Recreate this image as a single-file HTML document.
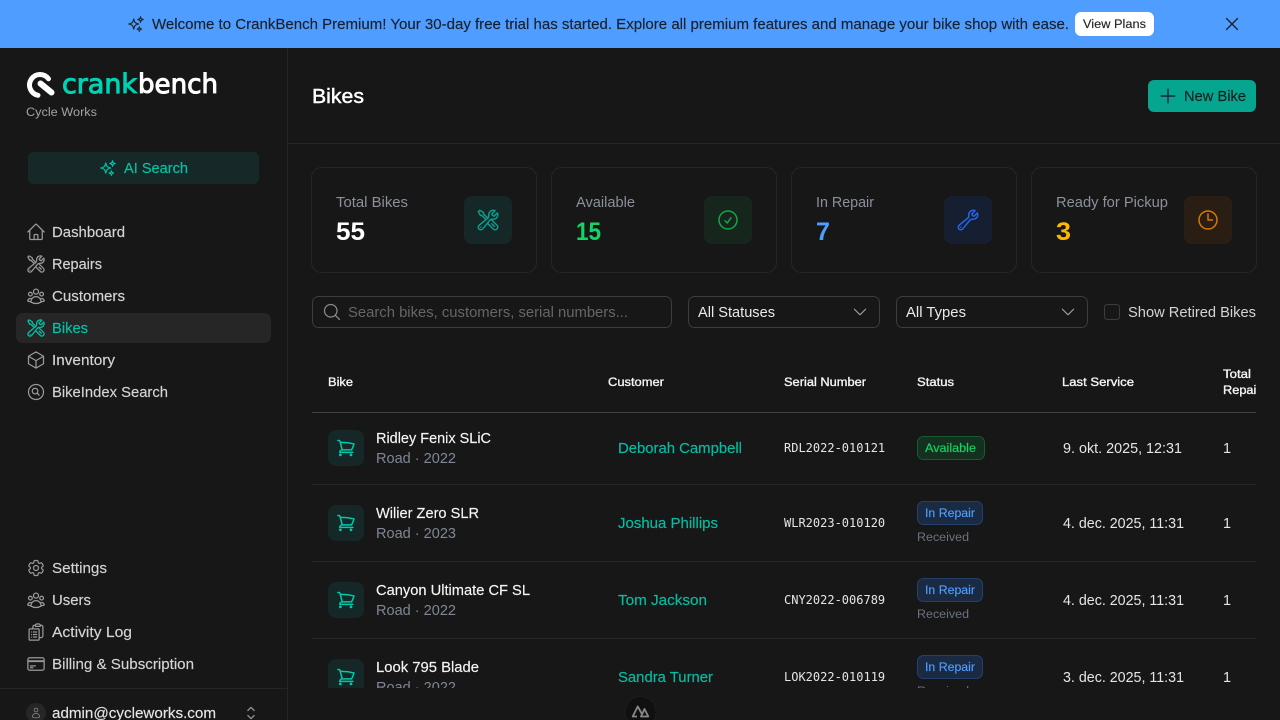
<!DOCTYPE html>
<html lang="en">
<head>
<meta charset="utf-8">
<title>CrankBench - Bikes</title>
<style>
html,body{margin:0;padding:0;width:1280px;height:720px;overflow:hidden;background:#171717}
svg{display:block}
text{font-family:"Liberation Sans",sans-serif;font-size:14.4px;fill:currentColor;white-space:pre}
.m{stroke:currentColor;stroke-width:.15}
.s{stroke:currentColor;stroke-width:.35}
.sm{font-size:12.3px}
.mono{font-family:"DejaVu Sans Mono",monospace;font-size:12px}
.i{fill:none;stroke-width:1.5;stroke-linecap:round;stroke-linejoin:round}
.nav{color:#d4d4d4}
.lbl{color:#8b909a}
.sub{color:#7f8794}
.nm{color:#f5f5f5}
.cu{color:#00bfa5}
.dt{color:#e5e5e5}
.hd{color:#f5f5f5}
.val{font-size:25px;font-weight:bold}
.logo{font-family:"DejaVu Sans",sans-serif;font-size:27px;stroke:currentColor;stroke-width:1}
</style>
</head>
<body>
<svg xmlns="http://www.w3.org/2000/svg" width="1280" height="720" viewBox="0 0 1280 720">
<defs>
<symbol id="tools" viewBox="0 0 24 24"><path d="M11.42 15.17 17.25 21A2.652 2.652 0 0 0 21 17.25l-5.877-5.877M11.42 15.17l2.496-3.03c.317-.384.74-.626 1.208-.766M11.42 15.17l-4.655 5.653a2.548 2.548 0 1 1-3.586-3.586l6.837-5.63m5.108-.233c.55-.164 1.163-.188 1.743-.14a4.5 4.5 0 0 0 4.486-6.336l-3.276 3.277a3.004 3.004 0 0 1-2.25-2.25l3.276-3.276a4.5 4.5 0 0 0-6.336 4.486c.091 1.076-.071 2.264-.904 2.95l-.102.085m-1.745 1.437L5.909 7.5H4.5L2.25 3.75l1.5-1.5L7.5 4.5v1.409l4.26 4.26m-1.745 1.437 1.745-1.437m6.615 8.206L15.75 15.75M4.867 19.125h.008v.008h-.008v-.008Z"/></symbol>
<symbol id="home" viewBox="0 0 24 24"><path d="m2.25 12 8.954-8.955c.44-.439 1.152-.439 1.591 0L21.75 12M4.5 9.75v10.125c0 .621.504 1.125 1.125 1.125H9.75v-4.875c0-.621.504-1.125 1.125-1.125h2.25c.621 0 1.125.504 1.125 1.125V21h4.125c.621 0 1.125-.504 1.125-1.125V9.75M8.25 21h8.25"/></symbol>
<symbol id="group" viewBox="0 0 24 24"><path d="M18 18.72a9.094 9.094 0 0 0 3.741-.479 3 3 0 0 0-4.682-2.72m.94 3.198.001.031c0 .225-.012.447-.037.666A11.944 11.944 0 0 1 12 21c-2.17 0-4.207-.576-5.963-1.584A6.062 6.062 0 0 1 6 18.719m12 0a5.971 5.971 0 0 0-.941-3.197m0 0A5.995 5.995 0 0 0 12 12.75a5.995 5.995 0 0 0-5.058 2.772m0 0a3 3 0 0 0-4.681 2.72 8.986 8.986 0 0 0 3.74.477m.94-3.197a5.971 5.971 0 0 0-.94 3.197M15 6.75a3 3 0 1 1-6 0 3 3 0 0 1 6 0Zm6 3a2.25 2.25 0 1 1-4.5 0 2.25 2.25 0 0 1 4.5 0Zm-13.5 0a2.25 2.25 0 1 1-4.5 0 2.25 2.25 0 0 1 4.5 0Z"/></symbol>
<symbol id="cube" viewBox="0 0 24 24"><path d="m21 7.5-9-5.25L3 7.5m18 0-9 5.25m9-5.25v9l-9 5.25M3 7.5l9 5.25M3 7.5v9l9 5.25m0-9v9"/></symbol>
<symbol id="msearch" viewBox="0 0 24 24"><path d="m15.75 15.75-2.489-2.489m0 0a3.375 3.375 0 1 0-4.773-4.773 3.375 3.375 0 0 0 4.774 4.774ZM21 12a9 9 0 1 1-18 0 9 9 0 0 1 18 0Z"/></symbol>
<symbol id="cog" viewBox="0 0 24 24"><path d="M9.594 3.94c.09-.542.56-.94 1.11-.94h2.593c.55 0 1.02.398 1.11.94l.213 1.281c.063.374.313.686.645.87.074.04.147.083.22.127.325.196.72.257 1.075.124l1.217-.456a1.125 1.125 0 0 1 1.37.49l1.296 2.247a1.125 1.125 0 0 1-.26 1.431l-1.003.827c-.293.241-.438.613-.43.992a7.723 7.723 0 0 1 0 .255c-.008.378.137.75.43.991l1.004.827c.424.35.534.955.26 1.43l-1.298 2.247a1.125 1.125 0 0 1-1.369.491l-1.217-.456c-.355-.133-.75-.072-1.076.124a6.47 6.47 0 0 1-.22.128c-.331.183-.581.495-.644.869l-.213 1.281c-.09.543-.56.94-1.11.94h-2.594c-.55 0-1.019-.398-1.11-.94l-.213-1.281c-.062-.374-.312-.686-.644-.87a6.52 6.52 0 0 1-.22-.127c-.325-.196-.72-.257-1.076-.124l-1.217.456a1.125 1.125 0 0 1-1.369-.49l-1.297-2.247a1.125 1.125 0 0 1 .26-1.431l1.004-.827c.292-.24.437-.613.43-.991a6.932 6.932 0 0 1 0-.255c.007-.38-.138-.751-.43-.992l-1.004-.827a1.125 1.125 0 0 1-.26-1.43l1.297-2.247a1.125 1.125 0 0 1 1.37-.491l1.216.456c.356.133.751.072 1.076-.124.072-.044.146-.086.22-.128.332-.183.582-.495.644-.869l.214-1.28Z"/><path d="M15 12a3 3 0 1 1-6 0 3 3 0 0 1 6 0Z"/></symbol>
<symbol id="clip" viewBox="0 0 24 24"><path d="M9 12h3.75M9 15h3.75M9 18h3.75m3 .75H18a2.25 2.25 0 0 0 2.25-2.25V6.108c0-1.135-.845-2.098-1.976-2.192a48.424 48.424 0 0 0-1.123-.08m-5.801 0c-.065.21-.1.433-.1.664 0 .414.336.75.75.75h4.5a.75.75 0 0 0 .75-.75 2.25 2.25 0 0 0-.1-.664m-5.8 0A2.251 2.251 0 0 1 13.5 2.25H15c1.012 0 1.867.668 2.15 1.586m-5.8 0c-.376.023-.75.05-1.124.08C9.095 4.01 8.25 4.973 8.25 6.108V8.25m0 0H4.875c-.621 0-1.125.504-1.125 1.125v11.25c0 .621.504 1.125 1.125 1.125h9.75c.621 0 1.125-.504 1.125-1.125V9.375c0-.621-.504-1.125-1.125-1.125H8.25ZM6.75 12h.008v.008H6.75V12Zm0 3h.008v.008H6.75V15Zm0 3h.008v.008H6.75V18Z"/></symbol>
<symbol id="card" viewBox="0 0 24 24"><path d="M2.25 8.25h19.5M2.25 9h19.5m-16.5 5.25h6m-6 2.25h3m-3.75 3h15a2.25 2.25 0 0 0 2.25-2.25V6.75A2.25 2.25 0 0 0 19.5 4.5h-15a2.25 2.25 0 0 0-2.25 2.25v10.5A2.25 2.25 0 0 0 4.5 19.5Z"/></symbol>
<symbol id="spark" viewBox="0 0 24 24"><path d="M9.813 15.904 9 18.75l-.813-2.846a4.5 4.5 0 0 0-3.09-3.09L2.25 12l2.846-.813a4.5 4.5 0 0 0 3.09-3.09L9 5.25l.813 2.846a4.5 4.5 0 0 0 3.09 3.09L15.75 12l-2.846.813a4.5 4.5 0 0 0-3.09 3.09ZM18.259 8.715 18 9.75l-.259-1.035a3.375 3.375 0 0 0-2.455-2.456L14.25 6l1.036-.259a3.375 3.375 0 0 0 2.455-2.456L18 2.25l.259 1.035a3.375 3.375 0 0 0 2.456 2.456L21.75 6l-1.035.259a3.375 3.375 0 0 0-2.456 2.456ZM16.894 20.567 16.5 21.75l-.394-1.183a2.25 2.25 0 0 0-1.423-1.423L13.5 18.75l1.183-.394a2.25 2.25 0 0 0 1.423-1.423l.394-1.183.394 1.183a2.25 2.25 0 0 0 1.423 1.423l1.183.394-1.183.394a2.25 2.25 0 0 0-1.423 1.423Z"/></symbol>
<symbol id="check" viewBox="0 0 24 24"><path d="M9 12.75 11.25 15 15 9.75M21 12a9 9 0 1 1-18 0 9 9 0 0 1 18 0Z"/></symbol>
<symbol id="wrench" viewBox="0 0 24 24"><path d="M21.75 6.75a4.5 4.5 0 0 1-4.884 4.484c-1.076-.091-2.264.071-2.95.904l-7.152 8.684a2.548 2.548 0 1 1-3.586-3.586l8.684-7.152c.833-.686.995-1.874.904-2.95a4.5 4.5 0 0 1 6.336-4.486l-3.276 3.276a3.004 3.004 0 0 0 2.25 2.25l3.276-3.276c.256.565.398 1.192.398 1.852Z"/><path d="M4.867 19.125h.008v.008h-.008v-.008Z"/></symbol>
<symbol id="clock" viewBox="0 0 24 24"><path d="M12 6v6h4.5m4.5 0a9 9 0 1 1-18 0 9 9 0 0 1 18 0Z"/></symbol>
<symbol id="cart" viewBox="0 0 24 24"><path d="M2.25 3h1.386c.51 0 .955.343 1.087.835l.383 1.437M7.5 14.25a3 3 0 0 0-3 3h15.75m-12.75-3h11.218c1.121-2.3 2.1-4.684 2.924-7.138a60.114 60.114 0 0 0-16.536-1.84M7.5 14.25 5.106 5.272M6 20.25a.75.75 0 1 1-1.5 0 .75.75 0 0 1 1.5 0Zm12.75 0a.75.75 0 1 1-1.5 0 .75.75 0 0 1 1.5 0Z"/></symbol>
<symbol id="glass" viewBox="0 0 24 24"><path d="m21 21-5.197-5.197m0 0A7.5 7.5 0 1 0 5.196 5.196a7.5 7.5 0 0 0 10.607 10.607Z"/></symbol>
<symbol id="chev" viewBox="0 0 24 24"><path d="m19.5 8.25-7.5 7.5-7.5-7.5"/></symbol>
<symbol id="updown" viewBox="0 0 24 24"><path d="M8.25 15 12 18.75 15.75 15m-7.5-6L12 5.25 15.75 9"/></symbol>
<symbol id="user" viewBox="0 0 24 24"><path d="M15.75 6a3.75 3.75 0 1 1-7.5 0 3.75 3.75 0 0 1 7.5 0ZM4.501 20.118a7.5 7.5 0 0 1 14.998 0A17.933 17.933 0 0 1 12 21.75c-2.676 0-5.216-.584-7.499-1.632Z"/></symbol>
<symbol id="xm" viewBox="0 0 24 24"><path d="M6 18 18 6M6 6l12 12"/></symbol>
<symbol id="plus" viewBox="0 0 24 24"><path d="M12 4.5v15m7.5-7.5h-15"/></symbol>
<clipPath id="tbl"><rect x="312" y="350" width="944" height="338"/></clipPath>
</defs>

<rect width="1280" height="720" fill="#171717"/>

<!-- Banner -->
<rect width="1280" height="48" fill="#4f9eff"/>
<use href="#spark" x="127" y="15" width="18" height="18" class="i" stroke="#1c2430"/>
<text x="152" y="29" class="m" textLength="917" lengthAdjust="spacingAndGlyphs" color="#1a202c">Welcome to CrankBench Premium! Your 30-day free trial has started. Explore all premium features and manage your bike shop with ease.</text>
<rect x="1075" y="12" width="79" height="24" rx="6" fill="#fff"/>
<text x="1083" y="28" class="sm m" textLength="63" lengthAdjust="spacingAndGlyphs" color="#262626">View Plans</text>
<use href="#xm" x="1221" y="13" width="22" height="22" class="i" stroke="#1c2430"/>

<!-- Sidebar -->
<rect x="287" y="48" width="1" height="672" fill="#262626"/>
<path d="M48.5 78.8A10.5 10.5 0 1 0 38 95.3" fill="none" stroke="#fff" stroke-width="5" stroke-linecap="round"/>
<path d="M40 83 52.5 93.5" fill="none" stroke="#171717" stroke-width="9.5" stroke-linecap="round"/>
<path d="M40.5 83.5 51.5 92.5" fill="none" stroke="#fff" stroke-width="6" stroke-linecap="round"/>
<text x="62" y="93" class="logo" textLength="75" lengthAdjust="spacingAndGlyphs" color="#00d2b4">crank</text>
<text x="138" y="93" class="logo" textLength="80" lengthAdjust="spacingAndGlyphs" color="#ffffff">bench</text>
<text x="26" y="116" class="sm" textLength="71" lengthAdjust="spacingAndGlyphs" color="#a3a3a3">Cycle Works</text>

<rect x="28" y="152" width="231" height="32" rx="6" fill="#162827"/>
<use href="#spark" x="99" y="159" width="18" height="18" class="i" stroke="#00c4a7"/>
<text x="124" y="173" class="m" textLength="64" lengthAdjust="spacingAndGlyphs" color="#00c4a7">AI Search</text>

<rect x="16" y="313" width="255" height="30" rx="7" fill="#262626"/>
<g class="i" stroke="#999">
<use href="#home" x="26" y="222" width="20" height="20"/>
<use href="#tools" x="26" y="254" width="20" height="20"/>
<use href="#group" x="26" y="286" width="20" height="20"/>
<use href="#tools" x="26" y="318" width="20" height="20" stroke="#00c4a7"/>
<use href="#cube" x="26" y="350" width="20" height="20"/>
<use href="#msearch" x="26" y="382" width="20" height="20"/>
<use href="#cog" x="26" y="558" width="20" height="20"/>
<use href="#group" x="26" y="590" width="20" height="20"/>
<use href="#clip" x="26" y="622" width="20" height="20"/>
<use href="#card" x="26" y="654" width="20" height="20"/>
</g>
<g class="nav">
<text x="52" y="237" class="m" textLength="73" lengthAdjust="spacingAndGlyphs">Dashboard</text>
<text x="52" y="269" class="m" textLength="50" lengthAdjust="spacingAndGlyphs">Repairs</text>
<text x="52" y="301" class="m" textLength="73" lengthAdjust="spacingAndGlyphs">Customers</text>
<text x="52" y="333" class="m" textLength="36" lengthAdjust="spacingAndGlyphs" color="#00c4a7">Bikes</text>
<text x="52" y="365" class="m" textLength="63" lengthAdjust="spacingAndGlyphs">Inventory</text>
<text x="52" y="397" class="m" textLength="116" lengthAdjust="spacingAndGlyphs">BikeIndex Search</text>
<text x="52" y="573" class="m" textLength="55" lengthAdjust="spacingAndGlyphs">Settings</text>
<text x="52" y="605" class="m" textLength="39" lengthAdjust="spacingAndGlyphs">Users</text>
<text x="52" y="637" class="m" textLength="80" lengthAdjust="spacingAndGlyphs">Activity Log</text>
<text x="52" y="669" class="m" textLength="142" lengthAdjust="spacingAndGlyphs">Billing &amp; Subscription</text>
</g>
<rect x="0" y="688" width="287" height="1" fill="#262626"/>
<circle cx="36" cy="713" r="10" fill="#262626"/>
<use href="#user" x="30" y="707" width="12" height="12" class="i" stroke="#8a8a8a"/>
<text x="52" y="718" class="m" textLength="164" lengthAdjust="spacingAndGlyphs" color="#e5e5e5">admin@cycleworks.com</text>
<use href="#updown" x="241" y="703" width="20" height="20" class="i" stroke="#8f8f8f"/>

<!-- Header -->
<rect x="288" y="143" width="992" height="1" fill="#262626"/>
<text x="312" y="103" style="font-size:20.5px;stroke-width:.45" class="s" textLength="52" lengthAdjust="spacingAndGlyphs" color="#fff">Bikes</text>
<rect x="1148" y="80" width="108" height="32" rx="6" fill="#05a58f"/>
<use href="#plus" x="1157" y="85" width="22" height="22" class="i" stroke="#123"/>
<text x="1184" y="101" class="m" textLength="62" lengthAdjust="spacingAndGlyphs" color="#13201f">New Bike</text>

<!-- Stat cards -->
<g fill="#171717" stroke="#262626">
<rect x="311.5" y="167.5" width="225" height="105" rx="10"/>
<rect x="551.5" y="167.5" width="225" height="105" rx="10"/>
<rect x="791.5" y="167.5" width="225" height="105" rx="10"/>
<rect x="1031.5" y="167.5" width="225" height="105" rx="10"/>
</g>
<g class="lbl">
<text x="336" y="207" textLength="72" lengthAdjust="spacingAndGlyphs">Total Bikes</text>
<text x="576" y="207" textLength="59" lengthAdjust="spacingAndGlyphs">Available</text>
<text x="816" y="207" textLength="58" lengthAdjust="spacingAndGlyphs">In Repair</text>
<text x="1056" y="207" textLength="112" lengthAdjust="spacingAndGlyphs">Ready for Pickup</text>
</g>
<text x="336" y="240" class="val" textLength="29" lengthAdjust="spacingAndGlyphs" color="#fff">55</text>
<text x="576" y="240" class="val" textLength="25" lengthAdjust="spacingAndGlyphs" color="#0fd765">15</text>
<text x="816" y="240" class="val" textLength="14" lengthAdjust="spacingAndGlyphs" color="#4f9eff">7</text>
<text x="1056" y="240" class="val" textLength="15" lengthAdjust="spacingAndGlyphs" color="#ffb800">3</text>
<rect x="464" y="196" width="48" height="48" rx="8" fill="#152827"/>
<rect x="704" y="196" width="48" height="48" rx="8" fill="#16261c"/>
<rect x="944" y="196" width="48" height="48" rx="8" fill="#161f31"/>
<rect x="1184" y="196" width="48" height="48" rx="8" fill="#2a1e14"/>
<use href="#tools" x="476" y="208" width="24" height="24" class="i" stroke="#0b9c8b"/>
<use href="#check" x="716" y="208" width="24" height="24" class="i" stroke="#16a34a"/>
<use href="#wrench" x="956" y="208" width="24" height="24" class="i" stroke="#2563eb"/>
<use href="#clock" x="1196" y="208" width="24" height="24" class="i" stroke="#d97706"/>

<!-- Filters -->
<g fill="none" stroke="#3d3d3d">
<rect x="312.5" y="296.5" width="359" height="31" rx="6"/>
<rect x="688.5" y="296.5" width="191" height="31" rx="6"/>
<rect x="896.5" y="296.5" width="191" height="31" rx="6"/>
<rect x="1104.5" y="304.5" width="15" height="15" rx="3"/>
</g>
<use href="#glass" x="322" y="302" width="20" height="20" class="i" stroke="#8a8a8a"/>
<text x="348" y="317" textLength="280" lengthAdjust="spacingAndGlyphs" color="#666">Search bikes, customers, serial numbers...</text>
<text x="698" y="317" textLength="77" lengthAdjust="spacingAndGlyphs" color="#eaeaea">All Statuses</text>
<use href="#chev" x="851" y="303" width="18" height="18" class="i" stroke="#999"/>
<text x="906" y="317" textLength="60" lengthAdjust="spacingAndGlyphs" color="#eaeaea">All Types</text>
<use href="#chev" x="1059" y="303" width="18" height="18" class="i" stroke="#999"/>
<text x="1128" y="317" textLength="128" lengthAdjust="spacingAndGlyphs" color="#d4d4d4">Show Retired Bikes</text>

<!-- Table -->
<g clip-path="url(#tbl)">
<g class="hd">
<text x="328" y="386" class="sm s" textLength="25" lengthAdjust="spacingAndGlyphs">Bike</text>
<text x="608" y="386" class="sm s" textLength="56" lengthAdjust="spacingAndGlyphs">Customer</text>
<text x="784" y="386" class="sm s" textLength="82" lengthAdjust="spacingAndGlyphs">Serial Number</text>
<text x="917" y="386" class="sm s" textLength="37" lengthAdjust="spacingAndGlyphs">Status</text>
<text x="1062" y="386" class="sm s" textLength="72" lengthAdjust="spacingAndGlyphs">Last Service</text>
<text x="1223" y="378" class="sm s" textLength="28" lengthAdjust="spacingAndGlyphs">Total</text>
<text x="1223" y="394" class="sm s" textLength="44" lengthAdjust="spacingAndGlyphs">Repairs</text>
</g>
<rect x="312" y="412" width="944" height="1" fill="#404040"/>
<rect x="312" y="484" width="944" height="1" fill="#262626"/>
<rect x="312" y="561" width="944" height="1" fill="#262626"/>
<rect x="312" y="638" width="944" height="1" fill="#262626"/>

<!-- Row 1 -->
<rect x="328" y="430" width="36" height="36" rx="8" fill="#152827"/>
<use href="#cart" x="336" y="438" width="20" height="20" class="i" style="stroke-width:1.8" stroke="#00c9ac"/>
<text x="376" y="443" class="nm m" textLength="115" lengthAdjust="spacingAndGlyphs">Ridley Fenix SLiC</text>
<text x="376" y="463" class="sub" textLength="80" lengthAdjust="spacingAndGlyphs">Road · 2022</text>
<text x="618" y="453" class="cu m" textLength="124" lengthAdjust="spacingAndGlyphs">Deborah Campbell</text>
<text x="784" y="452" class="mono" color="#e5e5e5">RDL2022-010121</text>
<rect x="917.5" y="436.5" width="67" height="23" rx="6" fill="#14301f" stroke="#175c35"/>
<text x="925" y="452" class="sm m" textLength="51" lengthAdjust="spacingAndGlyphs" color="#0fd765">Available</text>
<text x="1063" y="453" class="dt" textLength="119" lengthAdjust="spacingAndGlyphs">9. okt. 2025, 12:31</text>
<text x="1223" y="453" class="dt">1</text>

<!-- Row 2 -->
<rect x="328" y="505" width="36" height="36" rx="8" fill="#152827"/>
<use href="#cart" x="336" y="513" width="20" height="20" class="i" style="stroke-width:1.8" stroke="#00c9ac"/>
<text x="376" y="518" class="nm m" textLength="103" lengthAdjust="spacingAndGlyphs">Wilier Zero SLR</text>
<text x="376" y="538" class="sub" textLength="80" lengthAdjust="spacingAndGlyphs">Road · 2023</text>
<text x="618" y="528" class="cu m" textLength="100" lengthAdjust="spacingAndGlyphs">Joshua Phillips</text>
<text x="784" y="527" class="mono" color="#e5e5e5">WLR2023-010120</text>
<rect x="917.5" y="501.5" width="65" height="23" rx="6" fill="#1a2a42" stroke="#25406a"/>
<text x="925" y="517" class="sm m" textLength="50" lengthAdjust="spacingAndGlyphs" color="#4f9eff">In Repair</text>
<text x="917" y="541" class="sm" textLength="52" lengthAdjust="spacingAndGlyphs" color="#6b7280">Received</text>
<text x="1063" y="528" class="dt" textLength="121" lengthAdjust="spacingAndGlyphs">4. dec. 2025, 11:31</text>
<text x="1223" y="528" class="dt">1</text>

<!-- Row 3 -->
<rect x="328" y="582" width="36" height="36" rx="8" fill="#152827"/>
<use href="#cart" x="336" y="590" width="20" height="20" class="i" style="stroke-width:1.8" stroke="#00c9ac"/>
<text x="376" y="595" class="nm m" textLength="154" lengthAdjust="spacingAndGlyphs">Canyon Ultimate CF SL</text>
<text x="376" y="615" class="sub" textLength="80" lengthAdjust="spacingAndGlyphs">Road · 2022</text>
<text x="618" y="605" class="cu m" textLength="89" lengthAdjust="spacingAndGlyphs">Tom Jackson</text>
<text x="784" y="604" class="mono" color="#e5e5e5">CNY2022-006789</text>
<rect x="917.5" y="578.5" width="65" height="23" rx="6" fill="#1a2a42" stroke="#25406a"/>
<text x="925" y="594" class="sm m" textLength="50" lengthAdjust="spacingAndGlyphs" color="#4f9eff">In Repair</text>
<text x="917" y="618" class="sm" textLength="52" lengthAdjust="spacingAndGlyphs" color="#6b7280">Received</text>
<text x="1063" y="605" class="dt" textLength="121" lengthAdjust="spacingAndGlyphs">4. dec. 2025, 11:31</text>
<text x="1223" y="605" class="dt">1</text>

<!-- Row 4 -->
<rect x="328" y="659" width="36" height="36" rx="8" fill="#152827"/>
<use href="#cart" x="336" y="667" width="20" height="20" class="i" style="stroke-width:1.8" stroke="#00c9ac"/>
<text x="376" y="672" class="nm m" textLength="103" lengthAdjust="spacingAndGlyphs">Look 795 Blade</text>
<text x="376" y="692" class="sub" textLength="80" lengthAdjust="spacingAndGlyphs">Road · 2022</text>
<text x="618" y="682" class="cu m" textLength="95" lengthAdjust="spacingAndGlyphs">Sandra Turner</text>
<text x="784" y="681" class="mono" color="#e5e5e5">LOK2022-010119</text>
<rect x="917.5" y="655.5" width="65" height="23" rx="6" fill="#1a2a42" stroke="#25406a"/>
<text x="925" y="671" class="sm m" textLength="50" lengthAdjust="spacingAndGlyphs" color="#4f9eff">In Repair</text>
<text x="917" y="695" class="sm" textLength="52" lengthAdjust="spacingAndGlyphs" color="#6b7280">Received</text>
<text x="1063" y="682" class="dt" textLength="121" lengthAdjust="spacingAndGlyphs">3. dec. 2025, 11:31</text>
<text x="1223" y="682" class="dt">1</text>
</g>

<!-- Devtools button -->
<circle cx="640.5" cy="712" r="15.5" fill="#101010" stroke="#1c1c1c"/>
<path d="M637 716.5h-4.3l5-10 4 7M641 716.5h7.3l-3.8-7.5-3.5 7.5Z" fill="none" stroke="#888" stroke-width="1.8" stroke-linejoin="round"/>
</svg>
</body>
</html>
